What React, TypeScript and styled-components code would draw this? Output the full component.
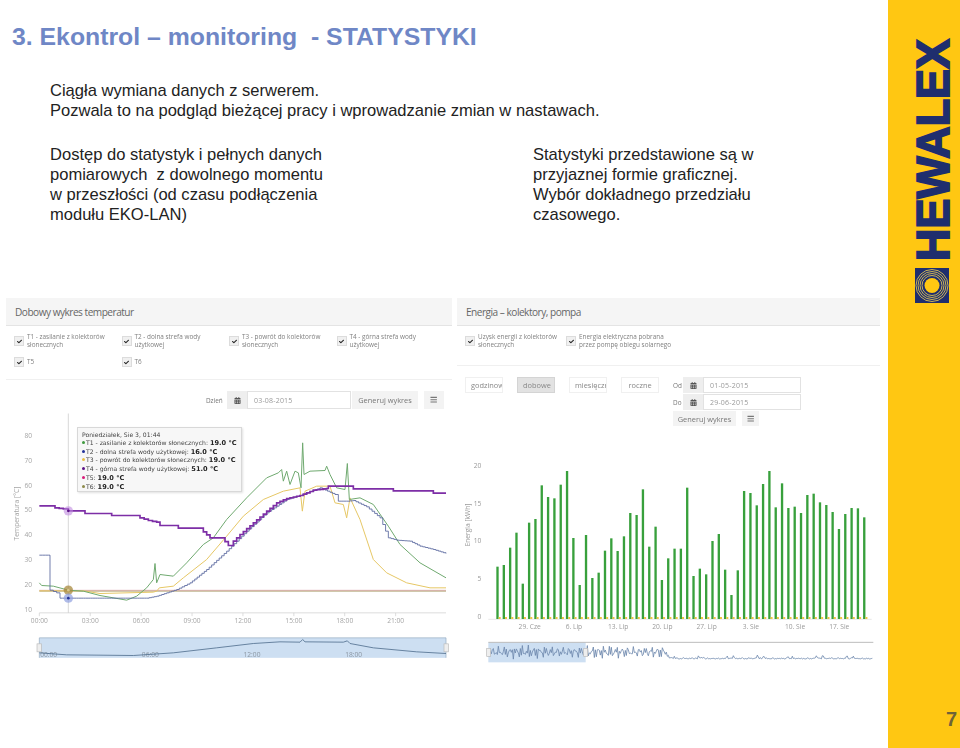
import React from 'react';
import styled, { createGlobalStyle } from 'styled-components';
import { FaBars, FaCalendarAlt, FaCheck } from 'react-icons/fa';

const GlobalStyle = createGlobalStyle`
  html, body {
    margin: 0;
    padding: 0;
    background: #fff;
  }
`;

const Slide = styled.div`
  width: 960px;
  height: 748px;
  display: flex;
  overflow: hidden;
  background: #fff;
  font-family: 'Liberation Sans', Arial, sans-serif;
`;

const Main = styled.main`
  width: 888px;
  display: flex;
  flex-direction: column;
`;

const Title = styled.h1`
  margin: 0;
  padding: 23px 0 0 12px;
  font-size: 24.8px;
  line-height: 28px;
  font-weight: 700;
  color: #6f87c6;
  white-space: pre;
`;

const Intro = styled.p`
  margin: 0;
  padding: 30px 0 0 50px;
  font-size: 16.55px;
  line-height: 20px;
  color: #222;
`;

const Columns = styled.div`
  display: grid;
  grid-template-columns: 483px 1fr;
  padding: 24px 0 0 50px;
`;

const Paragraph = styled.p`
  margin: 0;
  font-size: 16.55px;
  line-height: 20px;
  color: #222;
  white-space: pre;
`;

const PanelsRow = styled.div`
  display: flex;
  gap: 5px;
  padding: 73px 0 0 6px;
`;

const Panel = styled.section<{ $width: number }>`
  width: ${p => p.$width}px;
  height: 367px;
  display: flex;
  flex-direction: column;
  font-family: 'Open Sans', sans-serif;
  color: #777;
  filter: blur(0.4px);
`;

const PanelHeader = styled.header`
  height: 28px;
  flex: none;
  box-sizing: border-box;
  display: flex;
  align-items: center;
  padding-left: 9px;
  background: #f5f5f5;
  border-bottom: 1px solid #e4e4e4;
  font-size: 10.1px;
  letter-spacing: -0.5px;
  color: #666;
`;

const CheckGrid = styled.div<{ $columns: string; $height: number }>`
  height: ${p => p.$height}px;
  flex: none;
  box-sizing: border-box;
  display: grid;
  grid-template-columns: ${p => p.$columns};
  grid-auto-rows: min-content;
  row-gap: 5px;
  padding: 7px 0 0 8px;
  border-bottom: 1px solid #f0f0f0;
`;

const CheckItem = styled.label`
  min-height: 16px;
  display: flex;
  align-items: center;
  gap: 3px;
  font-size: 6.4px;
  line-height: 8px;
  color: #808080;
  white-space: pre;
`;

const CheckBox = styled.span`
  width: 10px;
  height: 10px;
  flex: none;
  box-sizing: border-box;
  display: flex;
  align-items: center;
  justify-content: center;
  border: 1px solid #dcdcdc;
  background: #f0f0f0;
  color: #222;
  font-size: 5px;
`;

const DayToolbar = styled.div`
  height: 18px;
  flex: none;
  display: flex;
  justify-content: flex-end;
  gap: 6px;
  margin: 11px 8px 4px 0;
`;

const InputWithButton = styled.div`
  display: flex;
  gap: 1px;
`;

const DateRow = styled.div<{ $inputWidth: number }>`
  display: grid;
  grid-template-columns: auto 20px ${p => p.$inputWidth}px;
  align-items: stretch;
`;

const FieldLabel = styled.span`
  min-width: 9px;
  padding-right: 1px;
  display: flex;
  align-items: center;
  font-size: 6.4px;
  color: #777;
`;

const Addon = styled.span`
  display: flex;
  align-items: center;
  justify-content: center;
  background: #eee;
  color: #555;
  font-size: 7px;
`;

const DateInput = styled.span`
  display: flex;
  align-items: center;
  box-sizing: border-box;
  padding-left: 6px;
  border: 1px solid #e2e2e2;
  font-size: 7px;
  letter-spacing: 0.2px;
  color: #999;
`;

const GhostButton = styled.span<{ $width: number }>`
  width: ${p => p.$width}px;
  display: flex;
  align-items: center;
  justify-content: center;
  background: #f3f3f3;
  color: #777;
  font-size: 7.4px;
`;

const RangeToolbar = styled.div`
  height: 50px;
  flex: none;
  display: flex;
  margin: 11px 0 1px 8px;
`;

const RangeTabs = styled.div`
  height: 16px;
  display: flex;
  gap: 14px;
`;

const RangeTab = styled.span<{ $active?: boolean }>`
  width: 38px;
  box-sizing: border-box;
  display: flex;
  align-items: center;
  justify-content: safe center;
  overflow: hidden;
  white-space: nowrap;
  padding: 0 5px;
  border: 1px solid ${p => (p.$active ? '#d4d4d4' : '#f0f0f0')};
  background: ${p => (p.$active ? '#e2e2e2' : '#fff')};
  color: #888;
  font-size: 7.4px;
`;

const DateGroup = styled.div`
  display: flex;
  flex-direction: column;
  margin-left: 14px;
`;

const DateRows = styled.div`
  display: grid;
  grid-template-rows: 16px 16px;
  gap: 1px;
`;

const ButtonRow = styled.div`
  height: 15px;
  margin-top: 1px;
  display: flex;
  gap: 6px;
`;

const ChartArea = styled.div`
  position: relative;
  flex: 1;
  min-height: 0;
`;

const ChartSvg = styled.svg`
  display: block;
  width: 100%;
  height: 100%;
`;

const ChartTooltip = styled.div`
  position: absolute;
  left: 71px;
  top: 14px;
  width: 159px;
  height: 60px;
  padding: 3px 0 0 4px;
  background: rgba(246, 246, 246, 0.9);
  border: 1px solid #d8d8d8;
  box-shadow: 1px 1px 2px rgba(0, 0, 0, 0.12);
  font-family: 'DejaVu Sans', sans-serif;
  font-size: 6.1px;
  line-height: 7.8px;
  color: #444;
  white-space: pre;
`;

const TooltipLine = styled.div`
  b {
    font-size: 6.6px;
    color: #222;
  }
`;

const Dot = styled.span<{ $color: string }>`
  display: inline-block;
  width: 3px;
  height: 3px;
  margin-right: 1px;
  vertical-align: 1px;
  border-radius: 50%;
  background: ${p => p.$color};
`;

const Sidebar = styled.aside`
  width: 72px;
  height: 748px;
  box-sizing: border-box;
  display: flex;
  flex-direction: column;
  align-items: flex-start;
  justify-content: space-between;
  padding: 37px 3px 18px 27px;
  background: #ffc712;
`;

const LogoSvg = styled.svg`
  display: block;
  overflow: visible;
`;

const PageNumber = styled.span`
  align-self: flex-end;
  font-size: 20px;
  line-height: 22px;
  font-weight: 700;
  color: #6e6238;
`;

const tooltipRows = [
  ['#3f9a3f', 'T1 - zasilanie z kolektorów słonecznych: ', '19.0 °C'],
  ['#23329a', 'T2 - dolna strefa wody użytkowej: ', '16.0 °C'],
  ['#e9bf45', 'T3 - powrót do kolektorów słonecznych: ', '19.0 °C'],
  ['#5b1286', 'T4 - górna strefa wody użytkowej: ', '51.0 °C'],
  ['#d81b78', 'T5: ', '19.0 °C'],
  ['#8d8a4a', 'T6: ', '19.0 °C'],
];

const t4 = '118,259 150,259 165,265 190,268 205,274 250,274 255,282 330,282 335,288 415,288 420,295 445,303 470,308 480,318 530,318 535,326 595,326 610,337 630,355 665,355 685,378 700,365 720,345 760,310 800,275 830,250 860,237 900,228 940,212 980,207 985,200 1055,200 1060,208 1170,208 1180,214 1290,214 1300,221 1338,221';
const t2 = '118,407 145,407 150,512 170,520 180,536 440,536 470,530 530,510 570,490 620,450 680,395 740,335 800,280 860,240 900,228 960,205 1005,225 1015,245 1040,245 1060,243 1100,262 1140,295 1165,355 1190,362 1230,365 1260,380 1300,390 1338,402';
const t1 = '118,490 125,498 160,500 205,512 250,515 300,528 380,542 410,530 440,505 460,480 465,432 470,490 480,465 520,470 560,430 610,375 640,355 680,300 740,235 800,175 835,160 845,150 850,185 860,155 870,195 885,155 895,160 903,205 908,70 912,165 930,155 975,153 980,140 990,165 1010,205 1035,210 1042,132 1048,240 1080,235 1120,255 1165,320 1200,375 1260,430 1338,475';
const t3 = '118,514 250,514 300,522 460,518 470,515 478,505 520,500 550,475 620,420 680,350 730,290 790,240 850,215 900,205 907,275 915,215 950,200 990,200 1005,250 1030,255 1040,295 1050,235 1080,300 1120,420 1160,460 1220,490 1290,505 1338,505';
const dayNav = '118,700 200,706 400,708 520,700 650,685 760,672 840,667 900,668 908,660 915,667 1030,668 1042,664 1050,672 1120,685 1250,697 1338,702';

const toStairs = (points: string, step: number) => {
  const pairs = points.split(' ').map(p => p.split(',').map(Number));
  const out: string[] = [];
  pairs.forEach(([x, y], i) => {
    if (i === 0) {
      out.push(`${x},${y}`);
      return;
    }
    const [px, py] = pairs[i - 1];
    const count = Math.max(1, Math.floor((x - px) / step));
    for (let k = 1; k <= count; k++) {
      const nx = px + ((x - px) * k) / count;
      const ny = py + ((y - py) * k) / count;
      out.push(`${nx.toFixed(1)},${(py + ((y - py) * (k - 1)) / count).toFixed(1)}`);
      out.push(`${nx.toFixed(1)},${ny.toFixed(1)}`);
    }
  });
  return out.join(' ');
};

const barTops = [
  350, 345, 293, 248, 401, 218, 207, 106, 141, 145, 104, 63, 264, 405, 255, 384, 368, 302, 265, 303,
  259, 189, 195, 118, 290, 230, 390, 325, 296, 296, 113, 378, 356, 373, 273, 252, 359, 435, 361, 123,
  129, 166, 102, 63, 172, 100, 174, 170, 189, 135, 131, 157, 165, 186, 237, 192, 174, 175, 202,
];

// jagged overview line of the energy navigator
const energyNav = Array.from({ length: 385 }, (_, i) => {
  const x = 100 + i * 3;
  const noise = Math.sin(i * 1.7) * Math.cos(i * 0.63) + 0.5 * Math.sin(i * 3.1);
  const y = x < 640 ? 606 + noise * 15 : 627 - Math.abs(noise) * (x % 90 < 30 ? 8 : 3);
  return `${x},${y.toFixed(1)}`;
}).join(' ');

const TemperatureChart = () => (
  <ChartSvg viewBox="18 -18 1338 753">
    <g fontFamily="'Open Sans', sans-serif" fontSize="20" fill="#a5a5a5">
      {[80, 70, 60, 50, 40, 30, 20, 10].map((v, i) => (
        <text key={v} x="96" y={55 + i * 74.6} textAnchor="end">{v}</text>
      ))}
      <text transform="translate(57 282) rotate(-90)" textAnchor="middle">Temperatura [°C]</text>
      {['00:00', '03:00', '06:00', '09:00', '12:00', '15:00', '18:00', '21:00'].map((v, i) => (
        <text key={v} x={118 + i * 152.7} y="609" textAnchor="middle">{v}</text>
      ))}
    </g>
    <line x1="118" y1="580" x2="1338" y2="580" stroke="#ccc" strokeWidth="2" />
    {[0, 1, 2, 3, 4, 5, 6, 7].map(i => (
      <line key={i} x1={118 + i * 152.7} y1="580" x2={118 + i * 152.7} y2="590" stroke="#ccc" strokeWidth="2" />
    ))}
    <line x1="205" y1="-18" x2="205" y2="580" stroke="#c4c4c4" strokeWidth="2" />
    <line x1="118" y1="512.5" x2="1338" y2="512.5" stroke="#e0a0ac" strokeWidth="2.5" />
    <line x1="118" y1="515" x2="1338" y2="515" stroke="#a89a68" strokeWidth="2.5" />
    <g fill="none" strokeLinejoin="miter">
      <polyline points={t3} stroke="#e6c765" strokeWidth="3" />
      <polyline points={t1} stroke="#6fa96f" strokeWidth="3" />
      <polyline points={toStairs(t2, 7)} stroke="#5a689f" strokeWidth="2.6" />
      <polyline points={toStairs(t4, 9)} stroke="#7d2ea6" strokeWidth="5" />
    </g>
    <circle cx="205" cy="274" r="14" fill="#c08ae0" opacity="0.6" />
    <circle cx="205" cy="274" r="4" fill="#5b1286" />
    <circle cx="205" cy="512" r="14" fill="#a8893f" opacity="0.75" />
    <circle cx="205" cy="512" r="4" fill="#d8c58a" />
    <circle cx="205" cy="536" r="14" fill="#8f9fe0" opacity="0.7" />
    <circle cx="205" cy="536" r="4" fill="#23329a" />
    <rect x="118" y="655" width="1220" height="60" fill="#cddff2" />
    <line x1="118" y1="655" x2="1338" y2="655" stroke="#93a9c0" strokeWidth="2" />
    <line x1="118" y1="655" x2="118" y2="715" stroke="#93a9c0" strokeWidth="2" />
    <line x1="1338" y1="655" x2="1338" y2="715" stroke="#93a9c0" strokeWidth="2" />
    <rect x="111" y="673" width="13" height="24" fill="#eee" stroke="#bbb" strokeWidth="2" />
    <rect x="1332" y="673" width="13" height="24" fill="#eee" stroke="#bbb" strokeWidth="2" />
    <g fontFamily="'Open Sans', sans-serif" fontSize="20" fill="#8c97a3">
      {['00:00', '06:00', '12:00', '18:00'].map((v, i) => (
        <text key={v} x={146 + i * 305} y="711" textAnchor="middle">{v}</text>
      ))}
    </g>
    <polyline points={dayNav} fill="none" stroke="#52708f" strokeWidth="2.5" />
  </ChartSvg>
);

const EnergyChart = () => (
  <ChartSvg viewBox="6 -66 1269 711">
    <g fontFamily="'Open Sans', sans-serif" fontSize="20" fill="#9a9a9a">
      {[20, 15, 10, 5, 0].map((v, i) => (
        <text key={v} x="79" y={54 + i * 113} textAnchor="end">{v}</text>
      ))}
      <text transform="translate(46 225) rotate(-90)" textAnchor="middle">Energia [kWh]</text>
      {['29. Cze', '6. Lip', '13. Lip', '20. Lip', '27. Lip', '3. Sie', '10. Sie', '17. Sie'].map((v, i) => (
        <text key={v} x={224 + i * 132.7} y="537" textAnchor="middle">{v}</text>
      ))}
    </g>
    <line x1="100" y1="508" x2="1250" y2="508" stroke="#ddd" strokeWidth="2" />
    {barTops.map((top, i) => (
      <g key={i}>
        <rect x={124 + i * 18.97} y={top} width="7" height={507 - top} fill="#38a03c" />
        <rect x={131 + i * 18.97} y="501" width="6" height="6" fill="#efc53f" />
      </g>
    ))}
    <rect x="100" y="577" width="292" height="60" fill="#cddff2" />
    <line x1="100" y1="577" x2="1255" y2="577" stroke="#bcbcbc" strokeWidth="3" />
    <polyline points={energyNav} fill="none" stroke="#6d88ad" strokeWidth="2.5" />
    <rect x="95" y="595" width="12" height="24" fill="#eee" stroke="#bbb" strokeWidth="2" />
    <rect x="386" y="595" width="12" height="24" fill="#eee" stroke="#bbb" strokeWidth="2" />
  </ChartSvg>
);

const HewalexLogo = () => (
  <LogoSvg width="34" height="266" viewBox="0 0 34 266">
    <text
      transform="translate(33.5 224) rotate(-90)"
      fontFamily="'Liberation Sans', sans-serif"
      fontWeight="700"
      fontSize="46"
      fill="#1f2e6e"
      stroke="#1f2e6e"
      strokeWidth="1.8"
      textLength="222"
      lengthAdjust="spacingAndGlyphs"
    >
      HEWALEX
    </text>
    <rect x="0" y="231" width="34" height="35" fill="#1f2e6e" />
    <g fill="none" stroke="#c9b35a" strokeWidth="1">
      <circle cx="17" cy="248.5" r="16" />
      <circle cx="17" cy="248.5" r="14" />
      <circle cx="17" cy="248.5" r="12" />
      <circle cx="17" cy="248.5" r="10" />
    </g>
    <circle cx="17" cy="248.5" r="7.5" fill="#ffc712" />
  </LogoSvg>
);

const Check = ({ children }: { children: React.ReactNode }) => (
  <CheckItem>
    <CheckBox><FaCheck /></CheckBox>
    <span>{children}</span>
  </CheckItem>
);

export default function App() {
  return (
    <>
      <GlobalStyle />
      <Slide>
        <Main>
          <Title>{'3. Ekontrol – monitoring  - STATYSTYKI'}</Title>
          <Intro>
            Ciągła wymiana danych z serwerem.
            <br />
            Pozwala to na podgląd bieżącej pracy i wprowadzanie zmian w nastawach.
          </Intro>
          <Columns>
            <Paragraph>
              {'Dostęp do statystyk i pełnych danych\npomiarowych  z dowolnego momentu\nw przeszłości (od czasu podłączenia\nmodułu EKO-LAN)'}
            </Paragraph>
            <Paragraph>
              {'Statystyki przedstawione są w\nprzyjaznej formie graficznej.\nWybór dokładnego przedziału\nczasowego.'}
            </Paragraph>
          </Columns>
          <PanelsRow>
            <Panel $width={446}>
              <PanelHeader>Dobowy wykres temperatur</PanelHeader>
              <CheckGrid $columns="repeat(4, 107.5px)" $height={54}>
                <Check>{'T1 - zasilanie z kolektorów\nsłonecznych'}</Check>
                <Check>{'T2 - dolna strefa wody\nużytkowej'}</Check>
                <Check>{'T3 - powrót do kolektorów\nsłonecznych'}</Check>
                <Check>{'T4 - górna strefa wody\nużytkowej'}</Check>
                <Check>T5</Check>
                <Check>T6</Check>
              </CheckGrid>
              <DayToolbar>
                <InputWithButton>
                  <DateRow $inputWidth={104}>
                    <FieldLabel>Dzień&nbsp;&nbsp;</FieldLabel>
                    <Addon><FaCalendarAlt /></Addon>
                    <DateInput>03-08-2015</DateInput>
                  </DateRow>
                  <GhostButton $width={66}>Generuj wykres</GhostButton>
                </InputWithButton>
                <GhostButton $width={20}><FaBars /></GhostButton>
              </DayToolbar>
              <ChartArea>
                <TemperatureChart />
                <ChartTooltip>
                  <TooltipLine>Poniedziałek, Sie 3, 01:44</TooltipLine>
                  {tooltipRows.map(([color, label, value]) => (
                    <TooltipLine key={label}>
                      <Dot $color={color} />{label}<b>{value}</b>
                    </TooltipLine>
                  ))}
                </ChartTooltip>
              </ChartArea>
            </Panel>
            <Panel $width={423}>
              <PanelHeader>Energia – kolektory, pompa</PanelHeader>
              <CheckGrid $columns="101px 1fr" $height={40}>
                <Check>{'Uzysk energii z kolektorów\nsłonecznych'}</Check>
                <Check>{'Energia elektryczna pobrana\nprzez pompę obiegu solarnego'}</Check>
              </CheckGrid>
              <RangeToolbar>
                <RangeTabs>
                  <RangeTab>godzinowe</RangeTab>
                  <RangeTab $active>dobowe</RangeTab>
                  <RangeTab>miesięczne</RangeTab>
                  <RangeTab>roczne</RangeTab>
                </RangeTabs>
                <DateGroup>
                  <DateRows>
                    <DateRow $inputWidth={98}>
                      <FieldLabel>Od</FieldLabel>
                      <Addon><FaCalendarAlt /></Addon>
                      <DateInput>01-05-2015</DateInput>
                    </DateRow>
                    <DateRow $inputWidth={98}>
                      <FieldLabel>Do</FieldLabel>
                      <Addon><FaCalendarAlt /></Addon>
                      <DateInput>29-06-2015</DateInput>
                    </DateRow>
                  </DateRows>
                  <ButtonRow>
                    <GhostButton $width={63}>Generuj wykres</GhostButton>
                    <GhostButton $width={17}><FaBars /></GhostButton>
                  </ButtonRow>
                </DateGroup>
              </RangeToolbar>
              <ChartArea>
                <EnergyChart />
              </ChartArea>
            </Panel>
          </PanelsRow>
        </Main>
        <Sidebar>
          <HewalexLogo />
          <PageNumber>7</PageNumber>
        </Sidebar>
      </Slide>
    </>
  );
}
